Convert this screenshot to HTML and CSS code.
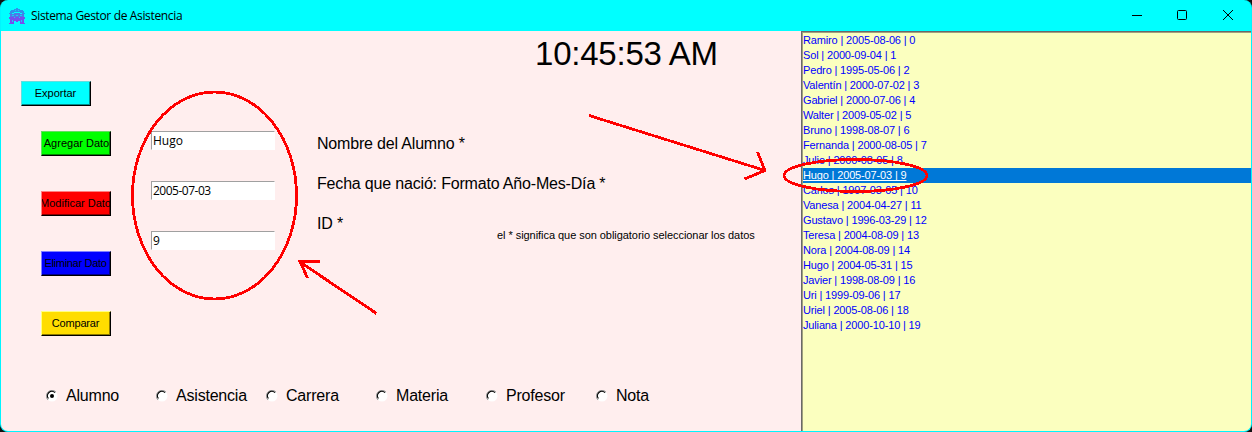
FILE: index.html
```html
<!DOCTYPE html>
<html lang="es">
<head>
<meta charset="utf-8">
<title>Sistema Gestor de Asistencia</title>
<link rel="stylesheet" href="styles.css">
</head>
<body>
<div class="window">
  <header class="titlebar">
    <svg class="app-icon" width="16" height="16" viewBox="0 0 16 16" shape-rendering="crispEdges">
      <path fill="#2f91ec" d="M5 1h2V0h2v1h2v1h3v1h1v2h-4V4H5v1H1V3h1V2h3zM0 5h3v1H0zM13 5h3v1h-3z"/>
      <path fill="#4e78e8" d="M1 6h4V5h6v1h4v3H1z"/>
      <path fill="#7350ef" d="M0 9h16v2h-1v4h1v1h-5v-3H9v1H7v-1H5v3H0v-1h1v-4H0z"/>
      <path fill="#18cdf5" d="M6 2h1v1H6zM9 2h1v1H9zM3 7h2v1H3zM11 7h2v1h-2zM7 7h2v1H7zM3 12h1v2H3zM12 12h1v2h-1zM5 9h1v1H5zM10 9h1v1h-1z"/>
    </svg>
    <span class="title">Sistema Gestor de Asistencia</span>
    <svg class="controls" width="106" height="16" viewBox="0 0 106 16" fill="none" stroke="#000">
      <path d="M2 8.500h10"/>
      <rect x="47.500" y="3.500" width="9" height="9" rx="1"/>
      <path d="M93 3l10 10M103 3L93 13"/>
    </svg>
  </header>
  <div class="content">
    <main class="form">
      <div class="clock">10:45:53 AM</div>
      <button class="btn export">Exportar</button>
      <div class="editor">
        <div class="actions">
          <button class="btn add"><span>Agregar Dato</span></button>
          <button class="btn edit"><span>Modificar Dato</span></button>
          <button class="btn remove"><span>Eliminar Dato</span></button>
          <button class="btn compare"><span>Comparar</span></button>
        </div>
        <div class="entries">
          <input class="entry name" value="Hugo">
          <input class="entry" value="2005-07-03">
          <input class="entry" value="9">
        </div>
        <div class="labels">
          <label>Nombre del Alumno *</label>
          <label>Fecha que nació: Formato Año-Mes-Día *</label>
          <label>ID *</label>
          <p class="note">el * significa que son obligatorio seleccionar los datos</p>
        </div>
      </div>
      <div class="tables">
        <label class="option"><svg class="radio" viewBox="0 0 12 12"><use href="#dial"/><circle cx="6" cy="6" r="2" fill="#000"/></svg>Alumno</label>
        <label class="option"><svg class="radio" viewBox="0 0 12 12"><use href="#dial"/></svg>Asistencia</label>
        <label class="option"><svg class="radio" viewBox="0 0 12 12"><use href="#dial"/></svg>Carrera</label>
        <label class="option"><svg class="radio" viewBox="0 0 12 12"><use href="#dial"/></svg>Materia</label>
        <label class="option"><svg class="radio" viewBox="0 0 12 12"><use href="#dial"/></svg>Profesor</label>
        <label class="option"><svg class="radio" viewBox="0 0 12 12"><use href="#dial"/></svg>Nota</label>
      </div>
    </main>
    <ul class="list">
      <li>Ramiro | 2005-08-06 | 0</li>
      <li>Sol | 2000-09-04 | 1</li>
      <li>Pedro | 1995-05-06 | 2</li>
      <li>Valentín | 2000-07-02 | 3</li>
      <li>Gabriel | 2000-07-06 | 4</li>
      <li>Walter | 2009-05-02 | 5</li>
      <li>Bruno | 1998-08-07 | 6</li>
      <li>Fernanda | 2000-08-05 | 7</li>
      <li>Julio | 2000-08-05 | 8</li>
      <li class="selected"><span>Hugo | 2005-07-03 | 9</span></li>
      <li>Carlos | 1997-03-05 | 10</li>
      <li>Vanesa | 2004-04-27 | 11</li>
      <li>Gustavo | 1996-03-29 | 12</li>
      <li>Teresa | 2004-08-09 | 13</li>
      <li>Nora | 2004-08-09 | 14</li>
      <li>Hugo | 2004-05-31 | 15</li>
      <li>Javier | 1998-08-09 | 16</li>
      <li>Uri | 1999-09-06 | 17</li>
      <li>Uriel | 2005-08-06 | 18</li>
      <li>Juliana | 2000-10-10 | 19</li>
    </ul>
  </div>
</div>
<svg width="0" height="0" class="defs">
  <symbol id="dial" viewBox="0 0 12 12">
    <circle cx="6" cy="6" r="5.500" fill="#fff"/>
    <path d="M2 10A5.300 5.300 0 0 1 10 2" fill="none" stroke="#999" stroke-width="1"/>
    <path d="M2.400 8.500A4.400 4.400 0 0 1 9 2.700" fill="none" stroke="#000" stroke-width="1.200"/>
  </symbol>
</svg>
<svg class="marks" width="1252" height="432" viewBox="0 0 1252 432" shape-rendering="crispEdges">
  <ellipse cx="214.500" cy="195.500" rx="82" ry="103.500"/>
  <ellipse cx="855.500" cy="175.500" rx="71.500" ry="16"/>
  <path d="M589 115.500L765 170.500M757.500 152L765 170.500L744.500 179"/>
  <path d="M376.500 313.500L300 262M320 261.500H300L307.500 278"/>
</svg>
</body>
</html>
```
FILE: styles.css
```css
* { box-sizing: border-box; }
body {
  margin: 0;
  width: 1252px;
  height: 432px;
  overflow: hidden;
  background: #111;
  font-family: "Liberation Sans", Arial, sans-serif;
  color: #000;
}
.window {
  display: flex;
  flex-direction: column;
  height: 432px;
  border: 1px solid #00f5ff;
  border-top: 0;
  border-radius: 8px;
  overflow: hidden;
  background: #00ffff;
}
.titlebar {
  display: flex;
  align-items: center;
  flex: 0 0 31px;
  padding: 0 15px 0 8px;
}
.title {
  margin-left: 6px;
  font: 12px "Open Sans", sans-serif;
  letter-spacing: -0.35px;
}
.controls { margin: -1px 0 0 auto; }
.content {
  display: grid;
  grid-template-columns: 800px 1fr;
  flex: 1;
  min-height: 0;
}
.form {
  display: flex;
  flex-direction: column;
  align-items: flex-start;
  background: #ffeeee;
}
.clock {
  height: 50px;
  padding-left: 534px;
  font-size: 33px;
  line-height: 45px;
  letter-spacing: -0.22px;
  white-space: nowrap;
}
.btn {
  display: flex;
  justify-content: center;
  align-items: center;
  width: 70px;
  height: 25px;
  padding: 0 1px 2px 0;
  overflow: hidden;
  border: 1px solid;
  border-right: 1px solid #000;
  border-bottom: 1px solid #000;
  font: 11px "Liberation Sans", Arial, sans-serif;
  white-space: nowrap;
  color: #000;
}
.export { margin-left: 20px; background: #00ffff; border-top-color: #62dede; border-left-color: #62dede; box-shadow: inset -1px -1px #008b8b; }
.add { padding-left: 2px; background: #00ff00; border-top-color: #62de62; border-left-color: #62de62; box-shadow: inset -1px -1px #008b00; }
.edit { background: #ff0000; border-top-color: #ff8080; border-left-color: #ff8080; box-shadow: inset -1px -1px #8b0000; }
.remove { letter-spacing: -0.3px; background: #0000ff; border-top-color: #8080ff; border-left-color: #8080ff; box-shadow: inset -1px -1px #00008b; }
.compare { letter-spacing: -0.2px; background: #ffdd00; border-top-color: #ffff80; border-left-color: #ffff80; box-shadow: inset -1px -1px #8b7800; }
.editor {
  display: grid;
  grid-template-columns: 110px 166px 1fr;
  height: 205px;
  margin: 25px 0 0 40px;
}
.actions { display: flex; flex-direction: column; gap: 35px; }
.entries { display: flex; flex-direction: column; gap: 31px; }
.entry {
  width: 124px;
  height: 19px;
  padding: 0 0 0 1px;
  border: 1px solid #fff;
  border-top-color: #a0a0a0;
  border-left-color: #a0a0a0;
  border-radius: 0;
  background: #fff;
  font: 12px "Open Sans", sans-serif;
  letter-spacing: -0.5px;
}
.name { letter-spacing: 0; }
.labels {
  display: flex;
  flex-direction: column;
  font-size: 16px;
  letter-spacing: -0.18px;
  white-space: nowrap;
}
.labels label { height: 40px; line-height: 25px; }
.note { margin: -23px 0 0 180px; font-size: 11px; line-height: 14px; letter-spacing: -0.05px; }
.tables {
  display: grid;
  grid-template-columns: repeat(6, 110px);
  margin: 48px 0 0 45px;
  font-size: 16px;
  letter-spacing: -0.2px;
}
.option { display: flex; align-items: center; gap: 8px; height: 24px; }
.radio { width: 12px; height: 12px; }
.list {
  margin: 0;
  padding: 1px 0 0;
  border: 1px solid #696969;
  border-right: 0;
  border-bottom: 0;
  box-shadow: inset 1px 1px #a0a080;
  list-style: none;
  background: #fbffbf;
  color: #0000ff;
  font-size: 11px;
  line-height: 15px;
  letter-spacing: -0.15px;
  white-space: nowrap;
}
.list li { height: 15px; margin-left: 1px; }
.list .selected { background: #0078d7; color: #fff; }
.selected span { text-decoration: underline; text-decoration-skip-ink: none; text-underline-offset: 1px; }
.defs { position: absolute; }
.marks {
  position: absolute;
  top: 0;
  left: 0;
  fill: none;
  stroke: #ff0000;
  stroke-width: 2.8px;
  pointer-events: none;
}
```
